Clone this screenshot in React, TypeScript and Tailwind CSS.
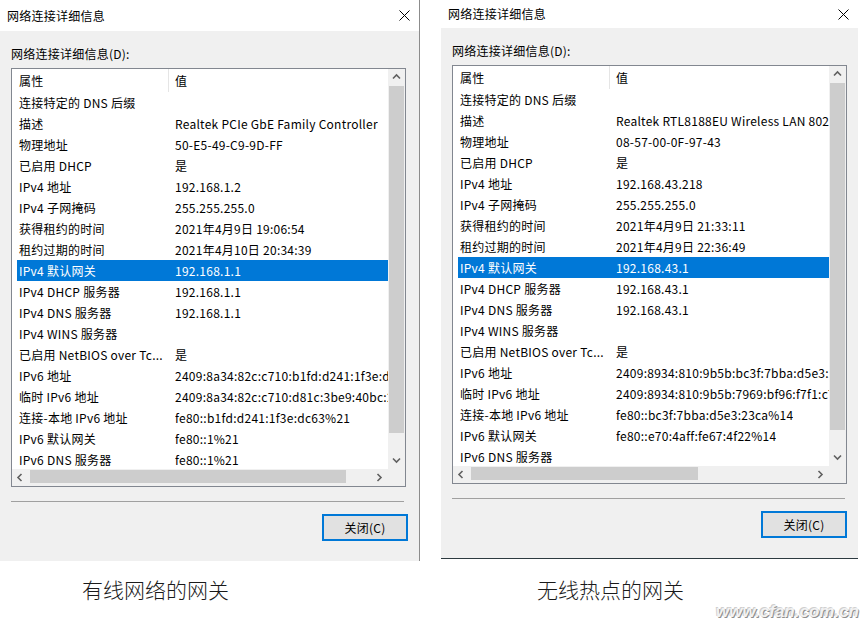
import React from "react";

type Row = [string, string];

const wiredRows: Row[] = [
  ["连接特定的 DNS 后缀", ""],
  ["描述", "Realtek PCIe GbE Family Controller"],
  ["物理地址", "50-E5-49-C9-9D-FF"],
  ["已启用 DHCP", "是"],
  ["IPv4 地址", "192.168.1.2"],
  ["IPv4 子网掩码", "255.255.255.0"],
  ["获得租约的时间", "2021年4月9日 19:06:54"],
  ["租约过期的时间", "2021年4月10日 20:34:39"],
  ["IPv4 默认网关", "192.168.1.1"],
  ["IPv4 DHCP 服务器", "192.168.1.1"],
  ["IPv4 DNS 服务器", "192.168.1.1"],
  ["IPv4 WINS 服务器", ""],
  ["已启用 NetBIOS over Tc...", "是"],
  ["IPv6 地址", "2409:8a34:82c:c710:b1fd:d241:1f3e:dc63"],
  ["临时 IPv6 地址", "2409:8a34:82c:c710:d81c:3be9:40bc:2a1e"],
  ["连接-本地 IPv6 地址", "fe80::b1fd:d241:1f3e:dc63%21"],
  ["IPv6 默认网关", "fe80::1%21"],
  ["IPv6 DNS 服务器", "fe80::1%21"],
];

const hotspotRows: Row[] = [
  ["连接特定的 DNS 后缀", ""],
  ["描述", "Realtek RTL8188EU Wireless LAN 802.11n USB 2.0 Network Adapter"],
  ["物理地址", "08-57-00-0F-97-43"],
  ["已启用 DHCP", "是"],
  ["IPv4 地址", "192.168.43.218"],
  ["IPv4 子网掩码", "255.255.255.0"],
  ["获得租约的时间", "2021年4月9日 21:33:11"],
  ["租约过期的时间", "2021年4月9日 22:36:49"],
  ["IPv4 默认网关", "192.168.43.1"],
  ["IPv4 DHCP 服务器", "192.168.43.1"],
  ["IPv4 DNS 服务器", "192.168.43.1"],
  ["IPv4 WINS 服务器", ""],
  ["已启用 NetBIOS over Tc...", "是"],
  ["IPv6 地址", "2409:8934:810:9b5b:bc3f:7bba:d5e3:23ca"],
  ["临时 IPv6 地址", "2409:8934:810:9b5b:7969:bf96:f7f1:c7d2"],
  ["连接-本地 IPv6 地址", "fe80::bc3f:7bba:d5e3:23ca%14"],
  ["IPv6 默认网关", "fe80::e70:4aff:fe67:4f22%14"],
  ["IPv6 DNS 服务器", ""],
];

const SELECTED = 8;

function Arrow({ dir }: { dir: "up" | "down" | "left" | "right" }) {
  const pts = {
    up: "1,5.5 4.5,2 8,5.5",
    down: "1,2.5 4.5,6 8,2.5",
    left: "5.5,1 2,4.5 5.5,8",
    right: "2.5,1 6,4.5 2.5,8",
  }[dir];
  return (
    <svg width="9" height="9" viewBox="0 0 9 9">
      <polyline points={pts} fill="none" stroke="#606060" strokeWidth="1.6" />
    </svg>
  );
}

function CloseGlyph() {
  return (
    <svg width="11" height="11" viewBox="0 0 11 11">
      <path d="M0.5 0.5 L10.5 10.5 M10.5 0.5 L0.5 10.5" stroke="#000" strokeWidth="1" />
    </svg>
  );
}

function DetailsDialog({
  rows,
  titleHeight,
  hThumb,
  className,
}: {
  rows: Row[];
  titleHeight: string;
  hThumb: string;
  className: string;
}) {
  return (
    <div className={className}>
      {/* title bar */}
      <div className={`${titleHeight} bg-white flex items-center justify-between pl-[7px] pr-[9px]`}>
        <span className="leading-[16px]">网络连接详细信息</span>
        <CloseGlyph />
      </div>

      <div className="bg-[#f0f0f0] h-[530px] pl-[11px] pt-[13px]">
        <div className="leading-[20px]">网络连接详细信息(D):</div>

        {/* list view */}
        <div className="mt-[4px] w-[395px] h-[419px] border border-[#828790] bg-white flex flex-col">
          <div className="flex h-[400px]">
            <div className="w-[376px] overflow-hidden">
              <div className="flex h-[23px] items-center">
                <div className="w-[156px] pl-[7px]">属性</div>
                <div className="w-px self-stretch bg-[#e5e5e5]" />
                <div className="pl-[6px]">值</div>
              </div>
              {rows.map(([name, value], i) => (
                <div
                  key={name}
                  className={`ml-[5px] flex h-[21px] items-center whitespace-nowrap overflow-hidden ${
                    i === SELECTED ? "bg-[#0078d7] text-white" : ""
                  }`}
                >
                  <div className="w-[158px] shrink-0 pl-[2px]">{name}</div>
                  <div className="overflow-hidden">{value}</div>
                </div>
              ))}
            </div>
            {/* vertical scrollbar */}
            <div className="w-[17px] bg-[#f0f0f0] flex flex-col">
              <div className="h-[17px] flex items-center justify-center">
                <Arrow dir="up" />
              </div>
              <div className="flex-1">
                <div className="mx-[1px] h-[347px] bg-[#cdcdcd]" />
              </div>
              <div className="h-[17px] flex items-center justify-center">
                <Arrow dir="down" />
              </div>
            </div>
          </div>
          {/* horizontal scrollbar */}
          <div className="flex h-[17px] bg-[#f0f0f0]">
            <div className="w-[17px] flex items-center justify-center">
              <Arrow dir="left" />
            </div>
            <div className="flex-1 pl-[1px]">
              <div className={`${hThumb} my-[1px] h-[13px] bg-[#cdcdcd]`} />
            </div>
            <div className="w-[17px] flex items-center justify-center">
              <Arrow dir="right" />
            </div>
            <div className="w-[17px]" />
          </div>
        </div>

        <div className="mt-[14px] w-[393px] h-px bg-[#a0a0a0]" />

        <div className="mt-[12px] flex justify-end pr-[11px]">
          <button className="w-[86px] h-[27px] border-2 border-[#0078d7] bg-[#e1e1e1] leading-[20px]">
            关闭(C)
          </button>
        </div>
      </div>
    </div>
  );
}

export default function App() {
  return (
    <div className="w-[863px] h-[626px] bg-white text-black text-[12px] tracking-[0.25px] [font-family:'Noto_Sans_CJK_SC',sans-serif] overflow-hidden">
      <div className="flex items-start gap-[21px] h-[561px]">
        <DetailsDialog
          rows={wiredRows}
          titleHeight="h-[31px]"
          hThumb="w-[316px]"
          className="w-[420px] border-r border-[#8c8c8c]"
        />
        <DetailsDialog
          rows={hotspotRows}
          titleHeight="h-[28px]"
          hThumb="w-[227px]"
          className="w-[417px] border-b border-[#2d3a40]"
        />
      </div>

      <div className="flex gap-[21px] tracking-normal">
        <div className="w-[420px] pl-[82px] pt-[14px] text-[21px] leading-[28px] font-light text-[#1a1a1a]">
          有线网络的网关
        </div>
        <div className="w-[417px] flex flex-col">
          <div className="pl-[96px] pt-[14px] text-[21px] leading-[28px] font-light text-[#1a1a1a]">
            无线热点的网关
          </div>
          <div className="self-end -mr-[1px] text-[17px] leading-[18px] font-bold italic text-[#f2f2f2] [font-family:'Liberation_Sans',sans-serif] [text-shadow:1px_1px_0_#8f8f8f,-1px_-1px_0_#cfcfcf]">
            www.cfan.com.cn
          </div>
        </div>
      </div>
    </div>
  );
}
